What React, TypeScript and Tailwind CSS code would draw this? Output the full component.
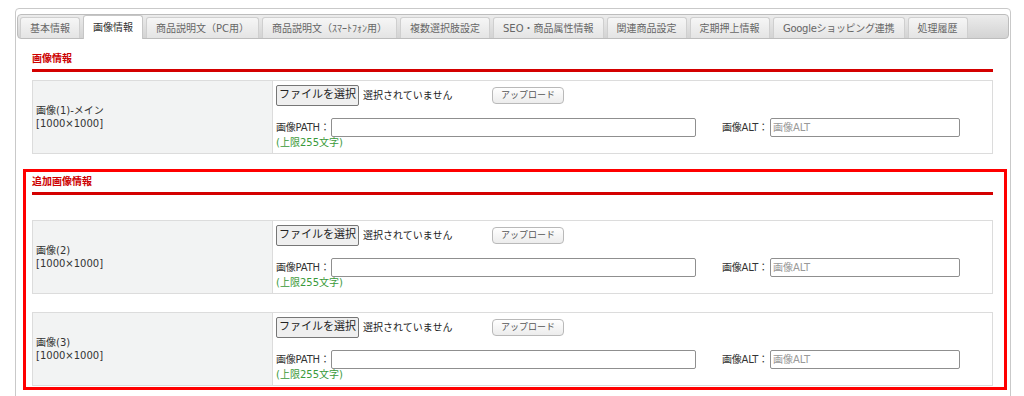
const tabs = [
  "基本情報",
  "画像情報",
  "商品説明文（PC用）",
  "商品説明文（ｽﾏｰﾄﾌｫﾝ用）",
  "複数選択肢設定",
  "SEO・商品属性情報",
  "関連商品設定",
  "定期押上情報",
  "Googleショッピング連携",
  "処理履歴",
];

const ImageRow = ({ name }: { name: string }) => {
  return (
    <div className="flex border border-[#dcdcdc]">
      <div className="w-[240px] shrink-0 bg-[#f2f3f3] border-r border-[#dcdcdc] flex flex-col justify-center pl-[3px] text-[10px] leading-[13px] text-[#333]">
        <span>{name}</span>
        <span>[1000×1000]</span>
      </div>
      <div className="grow pl-[3px] pt-[4px] pb-[4px] text-[10px] text-[#333]">
        <div className="flex items-center h-[21px]">
          <div className="w-[216px] flex items-center">
            <button className="h-[21px] w-[83px] bg-[#efefef] border border-[#767676] rounded-[2px] text-[11px] text-[#222]">
              ファイルを選択
            </button>
            <span className="ml-[4px] text-[10px] text-[#222]">選択されていません</span>
          </div>
          <button className="h-[17px] w-[72px] rounded-[4px] border border-[#b9b9b9] bg-gradient-to-b from-white to-[#ececec] text-[9px] text-[#555]">
            アップロード
          </button>
        </div>
        <div className="flex items-center mt-[12px] h-[19px]">
          <span className="shrink-0 whitespace-nowrap w-[55px] tracking-[-0.2px]">画像PATH：</span>
          <input className="h-[19px] w-[365px] border border-[#8f8f8f] rounded-[2px] px-[2px] text-[10px] outline-none" />
          <span className="shrink-0 whitespace-nowrap ml-[26px] w-[48px] tracking-[-0.2px]">画像ALT：</span>
          <input
            placeholder="画像ALT"
            className="h-[19px] w-[190px] border border-[#8f8f8f] rounded-[2px] px-[2px] text-[10px] placeholder:text-[#999] outline-none"
          />
        </div>
        <div className="leading-[12px] text-[#3a9a3a]">(上限255文字)</div>
      </div>
    </div>
  );
};

const SectionTitle = ({ title }: { title: string }) => (
  <div className="pb-[3px] border-b-[3px] border-[#d40000] text-[10px] leading-[14px] font-bold text-[#cc0000]">
    {title}
  </div>
);

export default function App() {
  return (
    <div className="w-[1024px] h-[396px] overflow-hidden bg-white font-['DejaVu_Sans','Noto_Sans_CJK_JP',sans-serif]">
      <div className="ml-[15px] mt-[8px] w-[996px] h-[420px] border border-[#c9c9c9] rounded-[4px] px-[1px] pt-[5px]">
        <div className="h-[25px] border border-[#bdbdbd] rounded-[4px] bg-gradient-to-b from-[#ececec] to-[#d3d3d3] flex items-end gap-[3px] pl-[2px]">
          {tabs.map((tab, i) =>
            i === 1 ? (
              <div
                key={tab}
                className="h-[24px] -mb-[1px] px-[9px] flex items-center bg-white border border-b-0 border-[#c6c6c6] rounded-t-[3px] text-[10px] text-[#333]"
              >
                {tab}
              </div>
            ) : (
              <div
                key={tab}
                className={`h-[21px] flex items-center justify-center whitespace-nowrap bg-gradient-to-b from-[#f6f6f6] to-[#e4e4e4] border border-b-0 border-[#cfcfcf] rounded-t-[3px] text-[10px] text-[#666] ${
                  i === 8 ? "w-[132px] tracking-[-0.3px]" : "px-[9px]"
                }`}
              >
                {tab}
              </div>
            )
          )}
        </div>

        <div className="pl-[15px] pr-[16px] pt-[13px]">
          <SectionTitle title="画像情報" />
          <div className="mt-[8px]">
            <ImageRow name="画像(1)-メイン" />
          </div>

          <div className="mt-[15px] -ml-[9px] -mr-[14px] border-[3px] border-[#ff0000] pl-[6px] pr-[11px] pt-[3px] pb-[1px]">
            <SectionTitle title="追加画像情報" />
            <div className="mt-[25px]">
              <ImageRow name="画像(2)" />
            </div>
            <div className="mt-[18px]">
              <ImageRow name="画像(3)" />
            </div>
          </div>
        </div>
      </div>
    </div>
  );
}
